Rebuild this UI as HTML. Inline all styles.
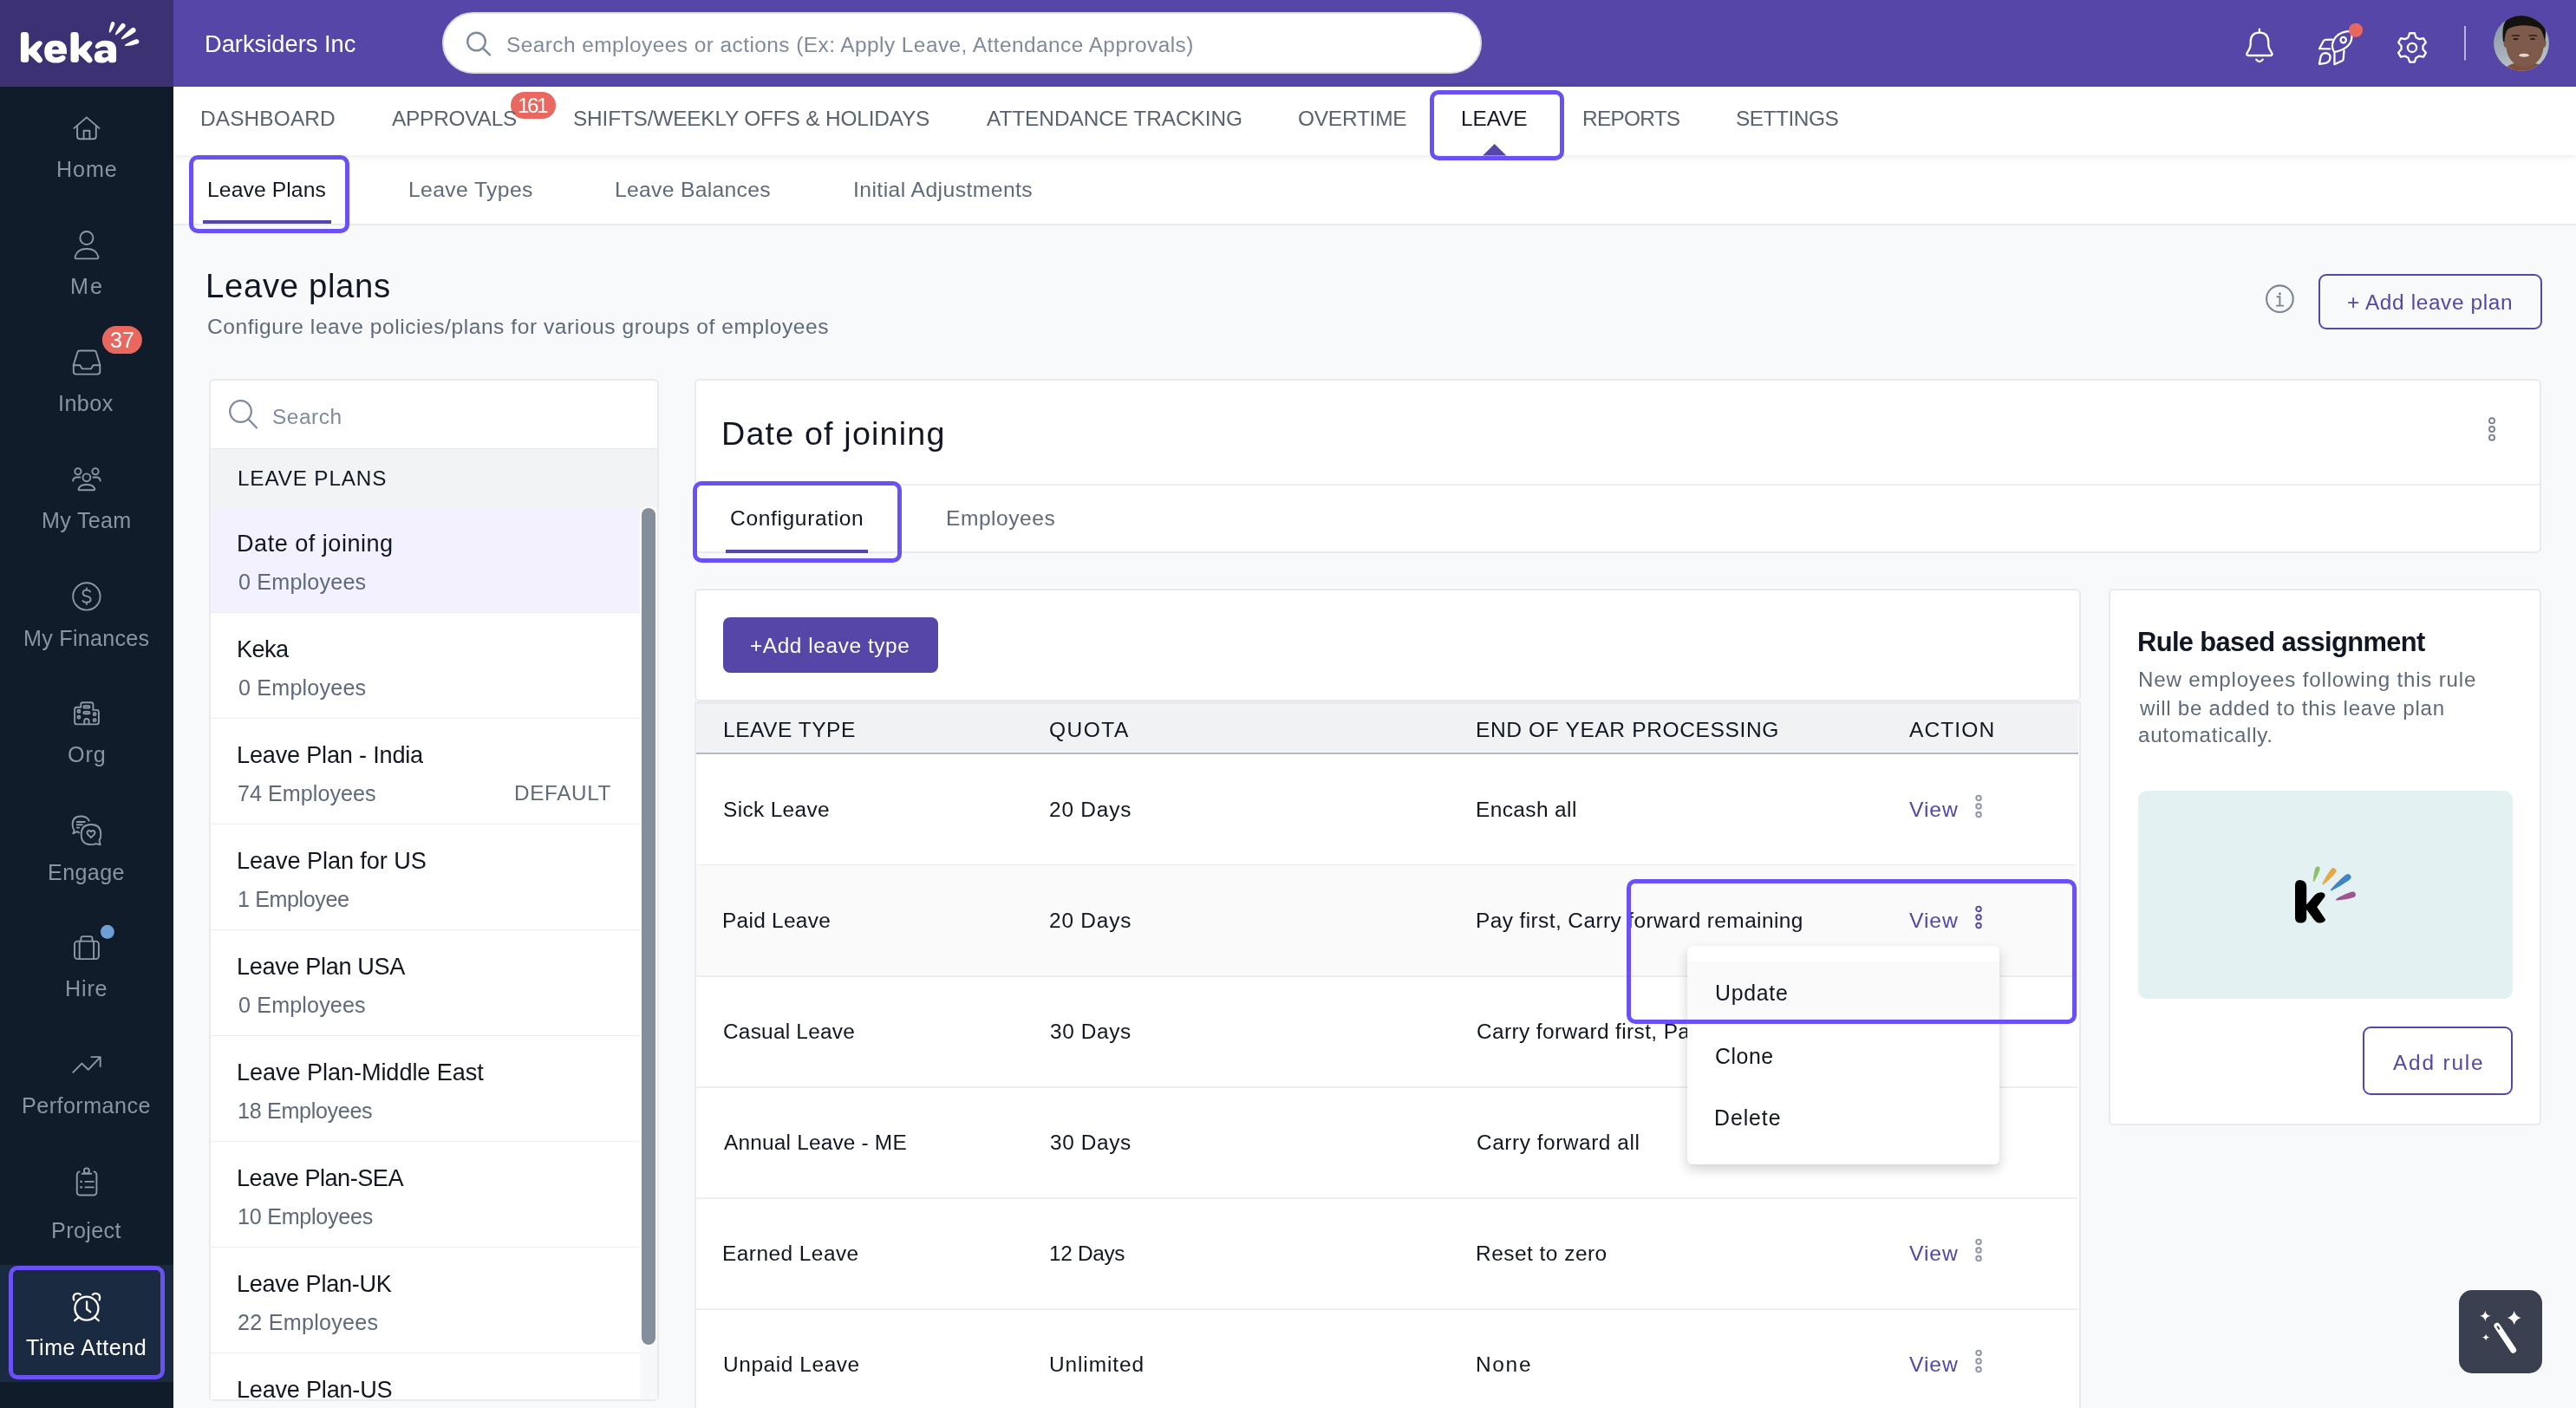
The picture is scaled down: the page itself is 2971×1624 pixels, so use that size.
<!DOCTYPE html><html><head><meta charset="utf-8"><title>Leave plans</title><style>*{box-sizing:border-box}html,body{margin:0;padding:0}body{width:2971px;height:1624px;overflow:hidden;background:#F8F9FB;font-family:"Liberation Sans",sans-serif;position:relative}.a{position:absolute}.t{position:absolute;line-height:0;white-space:pre;z-index:5;will-change:transform}svg.a{z-index:5;overflow:visible}</style></head><body><div class="a" style="left:0px;top:0px;width:200px;height:100px;background:#3C3173"></div>
<svg class="a" style="left:0px;top:0px;" width="200" height="100" viewBox="0 0 200 100"><path d="M23.9,39.8 Q23.9,37.1 26.8,37.1 L29.5,37.1 Q33.2,37.1 33.2,41.5 L33.2,57 L41,49.2 Q43.6,46.8 46.4,47.3 Q49.8,48.4 48.4,51.2 L42.2,59.1 L48.6,67.6 Q50,70.8 47,72.2 Q44,73.2 41.6,70.2 L33.2,62.2 L33.2,68.8 Q33.2,72.1 29.8,72.1 L27.3,72.1 Q23.9,72.1 23.9,68.8 Z" fill="#fff"/><path d="M23.9,39.8 Q23.9,37.1 26.8,37.1 L29.5,37.1 Q33.2,37.1 33.2,41.5 L33.2,57 L41,49.2 Q43.6,46.8 46.4,47.3 Q49.8,48.4 48.4,51.2 L42.2,59.1 L48.6,67.6 Q50,70.8 47,72.2 Q44,73.2 41.6,70.2 L33.2,62.2 L33.2,68.8 Q33.2,72.1 29.8,72.1 L27.3,72.1 Q23.9,72.1 23.9,68.8 Z" fill="#fff" transform="translate(57.6,0)"/><path d="M77,62.2 L77,59.5 Q77,46.8 64,46.8 Q51.2,46.8 51.2,59.7 Q51.2,72.6 64.5,72.6 Q71.5,72.6 75,68.7 Q76.6,66.4 74.6,64.6 Q72.5,62.8 70,64.4 Q67.5,66.3 64.5,66.2 Q61,66 59.9,62.2 Z" fill="#fff"/><path d="M59.9,57.2 Q60.5,53.2 64,53.2 Q67.5,53.2 68,57.2 Z" fill="#3C3173"/><path d="M110.6,55.6 Q108.9,53.6 110.6,51.4 Q114,46.8 121.5,46.8 Q134.1,46.8 134.1,58 L134.1,69.3 Q134.1,72.3 131,72.3 L128.6,72.3 Q125.6,72.3 124.8,69.4 Q121.6,72.6 117,72.6 Q108.7,72.6 108.7,65.5 Q108.7,58.2 118,58.2 L124.8,58.2 Q124.2,53.4 120,53.4 Q116.2,53.4 114,55.6 Q112.3,57.1 110.6,55.6 Z" fill="#fff"/><ellipse cx="121.2" cy="63.8" rx="3.7" ry="2.6" transform="rotate(-12 121.2 63.8)" fill="#3C3173"/></svg>
<svg class="a" style="left:0px;top:0px;" width="200" height="100" viewBox="0 0 200 100"><path d="M127.46,37.06 C129.28,34.41 131.35,30.64 132.27,28.14 A2.20,2.20 0 0 0 128.16,26.57 C127.16,29.04 126.19,33.23 125.77,36.42 A0.90,0.90 0 0 0 127.46,37.06 Z" fill="#fff"/><path d="M134.37,39.92 C137.88,37.63 141.85,34.10 143.93,31.55 A2.80,2.80 0 0 0 139.65,27.93 C137.49,30.41 134.67,34.92 133.00,38.76 A0.90,0.90 0 0 0 134.37,39.92 Z" fill="#fff"/><path d="M141.32,45.16 C146.31,43.10 152.11,39.75 155.40,37.20 A3.00,3.00 0 0 0 151.80,32.40 C148.44,34.86 143.60,39.50 140.24,43.72 A0.90,0.90 0 0 0 141.32,45.16 Z" fill="#fff"/><path d="M145.26,53.06 C149.72,52.73 155.29,51.61 158.61,50.42 A2.70,2.70 0 0 0 156.88,45.31 C153.52,46.39 148.42,48.90 144.68,51.35 A0.90,0.90 0 0 0 145.26,53.06 Z" fill="#fff"/></svg>
<div class="a" style="left:200px;top:0px;width:2771px;height:100px;background:#5546A8"></div>
<span class="t" style="left:235.50px;top:50.74px;font-size:27.29px;color:#fff;">Darksiders Inc</span>
<div class="a" style="left:510px;top:14px;width:1199px;height:71px;background:#fff;border:2px solid #DADDE6;border-radius:36px"></div>
<svg class="a" style="left:530px;top:30px;" width="44" height="40" viewBox="0 0 44 40"><circle cx="19.5" cy="18" r="10.3" fill="none" stroke="#7F8B9B" stroke-width="2.4"/><line x1="27" y1="25.6" x2="35" y2="33.4" stroke="#7F8B9B" stroke-width="2.4" stroke-linecap="round"/></svg>
<span class="t" style="left:584.40px;top:51.84px;font-size:24.43px;color:#7F8B9B;letter-spacing:0.446px;">Search employees or actions (Ex: Apply Leave, Attendance Approvals)</span>
<svg class="a" style="left:2560px;top:0px;" width="411" height="100" viewBox="0 0 411 100"><g transform="translate(-2560,0)"><path d="M2605.9,33.6 L2605.9,36.6" stroke="#fff" stroke-width="2.3" fill="none" stroke-linecap="round" stroke-linejoin="round"/><path d="M2593,64 L2619,64 Q2621.5,63.6 2620.2,61.2 L2617.6,56.6 Q2616.2,54 2616.2,51 L2616.2,48.4 Q2616.2,37.6 2605.9,37.6 Q2595.7,37.6 2595.7,48.4 L2595.7,51 Q2595.7,54 2594.2,56.6 L2591.6,61.2 Q2590.4,63.6 2593,64 Z" stroke="#fff" stroke-width="2.3" fill="none" stroke-linecap="round" stroke-linejoin="round"/><path d="M2602.2,68.6 Q2605.9,73.6 2609.7,68.6" stroke="#fff" stroke-width="2.3" fill="none" stroke-linecap="round" stroke-linejoin="round"/><path d="M2692.2,60.2 C2687.5,53 2690,39.5 2706,36.4 Q2710,35.8 2711.6,37 Q2712.8,39 2712.4,43.5 C2711.5,52 2704,57.6 2692.2,60.2 Z" stroke="#fff" stroke-width="2.3" fill="none" stroke-linecap="round" stroke-linejoin="round"/><circle cx="2702.7" cy="46.1" r="3.2" stroke="#fff" stroke-width="2.3" fill="none" stroke-linecap="round" stroke-linejoin="round"/><path d="M2689.8,45.6 L2682,45.8 Q2680.5,46 2679.8,47.3 L2675,56.2 L2687.2,56.4" stroke="#fff" stroke-width="2.3" fill="none" stroke-linecap="round" stroke-linejoin="round"/><path d="M2692.5,61.8 L2692.4,74.2 L2701.5,70 Q2702.6,69.3 2702.7,68 L2703.5,58.3" stroke="#fff" stroke-width="2.3" fill="none" stroke-linecap="round" stroke-linejoin="round"/><path d="M2675,73.8 L2676.3,66.5 Q2677.5,61.3 2682,61.2 Q2687.8,61.6 2687.6,66.6 Q2686.8,72.4 2680.5,73.2 Z" stroke="#fff" stroke-width="2.3" fill="none" stroke-linecap="round" stroke-linejoin="round"/><path d="M2777.48,43.14 L2779.21,38.23 L2784.79,38.23 L2786.52,43.14 L2789.93,45.11 L2795.04,44.15 L2797.83,48.98 L2794.44,52.93 L2794.44,56.87 L2797.83,60.82 L2795.04,65.65 L2789.93,64.69 L2786.52,66.66 L2784.79,71.57 L2779.21,71.57 L2777.48,66.66 L2774.07,64.69 L2768.96,65.65 L2766.17,60.82 L2769.56,56.87 L2769.56,52.93 L2766.17,48.98 L2768.96,44.15 L2774.07,45.11 Z" stroke="#fff" stroke-width="2.3" fill="none" stroke-linecap="round" stroke-linejoin="round"/><circle cx="2782" cy="54.9" r="5.1" stroke="#fff" stroke-width="2.3" fill="none" stroke-linecap="round" stroke-linejoin="round"/><circle cx="2717" cy="34.8" r="8.1" fill="#E8675F"/></g><rect x="282" y="30" width="2" height="39.5" fill="rgba(255,255,255,0.6)"/><defs><clipPath id="av"><circle cx="348" cy="49.9" r="31.9"/></clipPath><linearGradient id="avg" x1="0" y1="0" x2="0.3" y2="1"><stop offset="0" stop-color="#7F8E98"/><stop offset="0.6" stop-color="#A3AFB6"/><stop offset="1" stop-color="#C3CBCF"/></linearGradient></defs><g clip-path="url(#av)"><g transform="translate(-2560,0)"><rect x="2870" y="12" width="80" height="80" fill="url(#avg)"/><path d="M2884,92 Q2886,76 2900,73 L2924,73 Q2938,76 2940,92 Z" fill="#7E5038"/><ellipse cx="2890.5" cy="50" rx="3" ry="5" fill="#7A5646"/><ellipse cx="2933.5" cy="50" rx="3" ry="5" fill="#7A5646"/><ellipse cx="2912" cy="53" rx="21.5" ry="24.5" fill="#7D5A4A"/><rect x="2889" y="29" width="46" height="26" rx="5" fill="#7D5A4A"/><path d="M2887,48 Q2884,24 2896,19 Q2912,13 2928,19 Q2939,25 2935,48 Q2933,36 2928,32 Q2918,28.5 2906,29.5 Q2896,30.5 2892,34 Q2889,38 2888.5,48 Z" fill="#141211"/><path d="M2897,41.5 Q2901,40 2906,41.5 M2916.5,41.5 Q2921,40 2926,41.5" stroke="#2A1D17" stroke-width="1.6" fill="none"/><ellipse cx="2901.5" cy="45" rx="3" ry="1.3" fill="#2E201A"/><ellipse cx="2921" cy="45" rx="3" ry="1.3" fill="#2E201A"/><path d="M2903,61.5 Q2911,67.5 2919,61.5 Q2911,63.5 2903,61.5 Z" fill="#5A3A2E"/><ellipse cx="2911" cy="63.7" rx="6" ry="2" fill="#E6D6CF"/></g></g></svg>
<div class="a" style="left:0px;top:100px;width:200px;height:1524px;background:#111C2A"></div>
<div class="a" style="left:0px;top:1459px;width:200px;height:135px;background:#1A2B41"></div>
<svg class="a" style="left:0px;top:0px;" width="200" height="1624" viewBox="0 0 200 1624"><path d="M85.4,147.9 L99.9,135.4 L114.5,147.9" stroke="#8E98A6" stroke-width="1.9" fill="none" stroke-linecap="round" stroke-linejoin="round"/><path d="M89.1,145.4 L89.1,157.2 Q89.1,160.2 92.1,160.2 L107.8,160.2 Q110.8,160.2 110.8,157.2 L110.8,145.4" stroke="#8E98A6" stroke-width="1.9" fill="none" stroke-linecap="round" stroke-linejoin="round"/><path d="M96.6,160.2 L96.6,150.7 L103.4,150.7 L103.4,160.2" stroke="#8E98A6" stroke-width="1.9" fill="none" stroke-linecap="round" stroke-linejoin="round"/><circle cx="99.9" cy="274.5" r="7.5" stroke="#8E98A6" stroke-width="1.9" fill="none" stroke-linecap="round" stroke-linejoin="round"/><path d="M88,298.4 L111.8,298.4 Q113.8,298.4 113.3,296 Q111,287 100,287 Q89,287 86.7,296 Q86.2,298.4 88,298.4 Z" stroke="#8E98A6" stroke-width="1.9" fill="none" stroke-linecap="round" stroke-linejoin="round"/><path d="M84.8,421 L89.3,406.5 Q89.8,404.5 92,404.5 L108.3,404.5 Q110.5,404.5 111,406.5 L115.3,421 L115.3,428.5 Q115.3,431.6 112.2,431.6 L87.9,431.6 Q84.8,431.6 84.8,428.5 Z" stroke="#8E98A6" stroke-width="1.9" fill="none" stroke-linecap="round" stroke-linejoin="round"/><path d="M84.8,421.2 L92.3,421.2 L94.8,425.4 L105,425.4 L107.5,421.2 L115.3,421.2" stroke="#8E98A6" stroke-width="1.9" fill="none" stroke-linecap="round" stroke-linejoin="round"/><circle cx="99.9" cy="550.8" r="4.4" stroke="#8E98A6" stroke-width="1.9" fill="none" stroke-linecap="round" stroke-linejoin="round"/><path d="M91.6,565.2 L108.4,565.2 Q109.6,565.2 109.3,563.8 Q107.5,559 99.9,559 Q92.3,559 90.6,563.8 Q90.3,565.2 91.6,565.2 Z" stroke="#8E98A6" stroke-width="1.9" fill="none" stroke-linecap="round" stroke-linejoin="round"/><circle cx="89.9" cy="543.75" r="3.6" stroke="#8E98A6" stroke-width="1.9" fill="none" stroke-linecap="round" stroke-linejoin="round"/><circle cx="110" cy="543.75" r="3.6" stroke="#8E98A6" stroke-width="1.9" fill="none" stroke-linecap="round" stroke-linejoin="round"/><path d="M84.2,554.6 Q84.5,550.5 89,550.5 L92.4,550.5 M115.7,554.6 Q115.4,550.5 110.9,550.5 L107.5,550.5" stroke="#8E98A6" stroke-width="1.9" fill="none" stroke-linecap="round" stroke-linejoin="round"/><circle cx="99.9" cy="687.9" r="15.7" stroke="#8E98A6" stroke-width="1.9" fill="none" stroke-linecap="round" stroke-linejoin="round"/><path d="M104.1,682.3 Q102.8,680.6 99.9,680.6 Q95.6,680.6 95.6,683.9 Q95.6,686.7 99.9,687.6 Q104.6,688.6 104.6,691.6 Q104.6,694.8 99.9,694.8 Q96.5,694.8 95.4,693 M99.9,678.5 L99.9,680.6 M99.9,694.8 L99.9,697" stroke="#8E98A6" stroke-width="1.9" fill="none" stroke-linecap="round" stroke-linejoin="round"/><path d="M93.2,815.7 L93.2,812.6 Q93.2,810.2 95.6,810.2 L105,810.2 Q107.4,810.2 107.4,812.6 L107.4,818.9 L111.4,818.9 Q113.9,818.9 113.9,821.4 L113.9,833 Q113.9,835.4 111.4,835.4 L88.6,835.4 Q86.1,835.4 86.1,833 L86.1,818.2 Q86.1,815.7 88.6,815.7 Z" stroke="#8E98A6" stroke-width="1.9" fill="none" stroke-linecap="round" stroke-linejoin="round"/><path d="M97.3,835.4 L97.3,831.6 Q97.3,829 99.9,829 Q102.6,829 102.6,831.6 L102.6,835.4" stroke="#8E98A6" stroke-width="1.9" fill="none" stroke-linecap="round" stroke-linejoin="round"/><rect x="89.5" y="819.0" width="2.8" height="2.8" rx="1" stroke="#8E98A6" stroke-width="1.9" fill="none" stroke-linecap="round" stroke-linejoin="round"/><rect x="89.5" y="825.8000000000001" width="2.8" height="2.8" rx="1" stroke="#8E98A6" stroke-width="1.9" fill="none" stroke-linecap="round" stroke-linejoin="round"/><rect x="96.4" y="814.0999999999999" width="7" height="2.4" rx="1" stroke="#8E98A6" stroke-width="1.9" fill="none" stroke-linecap="round" stroke-linejoin="round"/><rect x="96.4" y="820.9" width="7" height="2.4" rx="1" stroke="#8E98A6" stroke-width="1.9" fill="none" stroke-linecap="round" stroke-linejoin="round"/><rect x="107.69999999999999" y="822.3000000000001" width="2.8" height="2.8" rx="1" stroke="#8E98A6" stroke-width="1.9" fill="none" stroke-linecap="round" stroke-linejoin="round"/><rect x="107.69999999999999" y="829.1" width="2.8" height="2.8" rx="1" stroke="#8E98A6" stroke-width="1.9" fill="none" stroke-linecap="round" stroke-linejoin="round"/><path d="M102.7,946.6 Q100.5,941.5 93.2,941.5 Q83.6,941.5 83.6,951 Q83.6,955.3 85.7,957.8 L84.3,961.3 L89,959.2 L91.2,960.3" stroke="#8E98A6" stroke-width="1.9" fill="none" stroke-linecap="round" stroke-linejoin="round"/><path d="M88.8,948 L97.8,948 M88.8,951.3 L94.8,951.3 M88.8,954.6 L91.2,954.6" stroke="#8E98A6" stroke-width="1.9" fill="none" stroke-linecap="round" stroke-linejoin="round"/><path d="M110.6,973.1 Q108.3,974.1 105,974.1 Q93.7,974.1 93.7,962.4 Q93.7,951 105,951 Q116.3,951 116.3,962.4 Q116.3,966.6 114.5,969.1 L115.6,974.2 Z" stroke="#8E98A6" stroke-width="1.9" fill="none" stroke-linecap="round" stroke-linejoin="round"/><path d="M105,966.2 L101.2,962.3 Q99.8,960.3 101.2,958.7 Q103.1,957 105,959.3 Q106.9,957 108.8,958.7 Q110.2,960.3 108.8,962.3 Z" stroke="#8E98A6" stroke-width="1.9" fill="none" stroke-linecap="round" stroke-linejoin="round"/><rect x="86" y="1085.6" width="27.9" height="20.5" rx="3.5" stroke="#8E98A6" stroke-width="1.9" fill="none" stroke-linecap="round" stroke-linejoin="round"/><path d="M93.4,1085.6 L93.4,1082.2 Q93.4,1080.1 95.5,1080.1 L104.4,1080.1 Q106.5,1080.1 106.5,1082.2 L106.5,1085.6 M91.7,1085.6 L91.7,1106.1 M108.1,1085.6 L108.1,1106.1" stroke="#8E98A6" stroke-width="1.9" fill="none" stroke-linecap="round" stroke-linejoin="round"/><circle cx="123.9" cy="1074.8" r="10.5" fill="#0F1A27"/><circle cx="123.9" cy="1074.8" r="8" fill="#6C9FD6"/><path d="M84.3,1236.9 L94.4,1226.6 L101.8,1233.8 L115.5,1219.3 M105.4,1219.1 L115.7,1219.1 L115.7,1230" stroke="#8E98A6" stroke-width="1.9" fill="none" stroke-linecap="round" stroke-linejoin="round"/><path d="M91.5,1351.4 Q88.75,1352 88.75,1355.6 L88.75,1374.4 Q88.75,1378.55 92.9,1378.55 L107.2,1378.55 Q111.4,1378.55 111.4,1374.4 L111.4,1355.6 Q111.4,1352 108.5,1351.4" stroke="#8E98A6" stroke-width="1.9" fill="none" stroke-linecap="round" stroke-linejoin="round"/><circle cx="99.9" cy="1350.4" r="3" stroke="#8E98A6" stroke-width="1.9" fill="none" stroke-linecap="round" stroke-linejoin="round"/><path d="M94.6,1353.8 L105.3,1353.8" stroke="#8E98A6" stroke-width="1.9" fill="none" stroke-linecap="round" stroke-linejoin="round" stroke-width="2.2"/><circle cx="93.6" cy="1362.9" r="1.3" fill="#8E98A6"/><circle cx="93.6" cy="1369.4" r="1.3" fill="#8E98A6"/><path d="M98.4,1362.9 L107.8,1362.9 M98.4,1369.4 L107.8,1369.4" stroke="#8E98A6" stroke-width="1.9" fill="none" stroke-linecap="round" stroke-linejoin="round"/><circle cx="99.9" cy="1509.1" r="13.5" stroke="#fff" stroke-width="2.3" fill="none" stroke-linecap="round" stroke-linejoin="round"/><path d="M100.1,1501.5 L100.1,1510 L104.2,1513.2" stroke="#fff" stroke-width="2.3" fill="none" stroke-linecap="round" stroke-linejoin="round"/><path d="M85.2,1499.3 Q83.5,1494 87.5,1492.3 Q90.8,1491 93,1493.3 M114.6,1499.3 Q116.3,1494 112.3,1492.3 Q109,1491 106.8,1493.3 M90.3,1519.6 L86.2,1523.2 M109.6,1519.6 L113.8,1523.2" stroke="#fff" stroke-width="2.3" fill="none" stroke-linecap="round" stroke-linejoin="round"/></svg>
<svg class="a" style="left:116px;top:375.6px;" width="48" height="32.1" viewBox="0 0 48 32.1"><rect x="1.9" y="0" width="46" height="32.1" rx="16" fill="#E8675F"/></svg>
<span class="t" style="left:127.10px;top:392.29px;font-size:25.14px;color:#fff;letter-spacing:0.027px;">37</span>
<span class="t" style="left:64.65px;top:195.19px;font-size:25.14px;color:#8A95A2;letter-spacing:0.884px;">Home</span>
<span class="t" style="left:81.00px;top:330.29px;font-size:25.14px;color:#8A95A2;letter-spacing:2.071px;">Me</span>
<span class="t" style="left:67.15px;top:465.29px;font-size:25.14px;color:#8A95A2;letter-spacing:0.450px;">Inbox</span>
<span class="t" style="left:47.60px;top:600.29px;font-size:25.14px;color:#8A95A2;letter-spacing:0.303px;">My Team</span>
<span class="t" style="left:26.75px;top:735.79px;font-size:25.14px;color:#8A95A2;letter-spacing:0.264px;">My Finances</span>
<span class="t" style="left:78.15px;top:870.49px;font-size:25.14px;color:#8A95A2;letter-spacing:0.895px;">Org</span>
<span class="t" style="left:55.20px;top:1005.59px;font-size:25.14px;color:#8A95A2;letter-spacing:0.390px;">Engage</span>
<span class="t" style="left:75.20px;top:1139.89px;font-size:25.14px;color:#8A95A2;letter-spacing:0.836px;">Hire</span>
<span class="t" style="left:25.30px;top:1274.89px;font-size:25.14px;color:#8A95A2;letter-spacing:0.454px;">Performance</span>
<span class="t" style="left:58.75px;top:1418.99px;font-size:25.14px;color:#8A95A2;letter-spacing:0.381px;">Project</span>
<span class="t" style="left:30.00px;top:1553.89px;font-size:25.14px;color:#fff;letter-spacing:0.565px;">Time Attend</span>
<div class="a" style="left:10.2px;top:1459.9px;width:179.9px;height:131.0px;border:5.8px solid #6B50F5;border-radius:10px;z-index:50"></div>
<div class="a" style="left:200px;top:100px;width:2771px;height:78.5px;background:#fff;box-shadow:0 2px 7px rgba(20,30,50,0.09);z-index:2"></div>
<div class="a" style="left:200px;top:178px;width:2771px;height:82px;background:#fff;border-bottom:2px solid #E8EAEE;z-index:1"></div>
<div style="position:absolute;z-index:3">
<span class="t" style="left:231.20px;top:136.54px;font-size:24.43px;color:#58636F;letter-spacing:0.130px;">DASHBOARD</span>
<span class="t" style="left:452.00px;top:136.54px;font-size:24.43px;color:#58636F;letter-spacing:-0.231px;">APPROVALS</span>
<span class="t" style="left:661.00px;top:136.54px;font-size:24.43px;color:#58636F;letter-spacing:-0.188px;">SHIFTS/WEEKLY OFFS &amp; HOLIDAYS</span>
<span class="t" style="left:1137.50px;top:136.54px;font-size:24.43px;color:#58636F;letter-spacing:-0.067px;">ATTENDANCE TRACKING</span>
<span class="t" style="left:1496.50px;top:136.54px;font-size:24.43px;color:#58636F;letter-spacing:-0.217px;">OVERTIME</span>
<span class="t" style="left:1685.00px;top:136.54px;font-size:24.43px;color:#111722;letter-spacing:-0.084px;">LEAVE</span>
<span class="t" style="left:1825.00px;top:136.54px;font-size:24.43px;color:#58636F;letter-spacing:-0.754px;">REPORTS</span>
<span class="t" style="left:2002.00px;top:136.54px;font-size:24.43px;color:#58636F;letter-spacing:-0.490px;">SETTINGS</span>
<div class="a" style="left:589.4px;top:105.8px;width:51.4px;height:31.7px;background:#E8675F;border-radius:16px"></div>
<span class="t" style="left:596.50px;top:122.28px;font-size:24.29px;color:#fff;letter-spacing:-2.504px;">161</span>
<svg class="a" style="left:1710px;top:166px;" width="28" height="14" viewBox="0 0 28 14"><path d="M0,13.5 L13.7,0 L27.4,13.5 Z" fill="#5546A8"/></svg>
</div>
<div class="a" style="left:1648.8px;top:104px;width:155.70000000000005px;height:81.1px;border:5.8px solid #6B50F5;border-radius:10px;z-index:50"></div>
<span class="t" style="left:238.90px;top:219.24px;font-size:24.71px;color:#111722;letter-spacing:0.089px;">Leave Plans</span>
<span class="t" style="left:470.50px;top:219.24px;font-size:24.71px;color:#5E6A7A;letter-spacing:0.378px;">Leave Types</span>
<span class="t" style="left:709.00px;top:219.24px;font-size:24.71px;color:#5E6A7A;letter-spacing:0.297px;">Leave Balances</span>
<span class="t" style="left:984.00px;top:219.24px;font-size:24.71px;color:#5E6A7A;letter-spacing:0.422px;">Initial Adjustments</span>
<div class="a" style="left:234px;top:254px;width:148px;height:4px;background:#5546A8;z-index:4"></div>
<div class="a" style="left:217.9px;top:179px;width:185.20000000000002px;height:89.89999999999998px;border:5.8px solid #6B50F5;border-radius:10px;z-index:50"></div>
<span class="t" style="left:237.40px;top:329.93px;font-size:38.29px;color:#111722;letter-spacing:0.669px;">Leave plans</span>
<span class="t" style="left:239.40px;top:377.29px;font-size:24.57px;color:#5E6A7A;letter-spacing:0.554px;">Configure leave policies/plans for various groups of employees</span>
<svg class="a" style="left:2610px;top:325px;" width="40" height="40" viewBox="0 0 40 40"><circle cx="19.4" cy="19.7" r="15.3" fill="none" stroke="#7A8491" stroke-width="2.1"/><circle cx="19.4" cy="13.8" r="1.5" fill="#7A8491"/><path d="M15.6,17.3 L19.4,17.3 L19.4,27.6 M15,27.6 L24,27.6" fill="none" stroke="#7A8491" stroke-width="1.9"/></svg>
<div class="a" style="left:2673.8px;top:315.8px;width:258px;height:64px;border:2.2px solid #5546A8;border-radius:9px"></div>
<span class="t" style="left:2706.70px;top:349.04px;font-size:24.43px;color:#5546A8;letter-spacing:0.617px;">+ Add leave plan</span>
<div class="a" style="left:241px;top:437px;width:519px;height:1179px;background:#fff;border:2px solid #E8EAEE;border-radius:6px"></div>
<svg class="a" style="left:258px;top:456px;" width="44" height="44" viewBox="0 0 44 44"><circle cx="19.5" cy="18.5" r="12.3" fill="none" stroke="#7F8B9B" stroke-width="2.3"/><line x1="28.5" y1="27.5" x2="38" y2="37.5" stroke="#7F8B9B" stroke-width="2.3" stroke-linecap="round"/></svg>
<span class="t" style="left:314.00px;top:480.54px;font-size:24.43px;color:#7F8B9B;letter-spacing:0.541px;">Search</span>
<div class="a" style="left:243px;top:517px;width:515px;height:68px;background:#F2F3F5;border-top:1px solid #E8EAEE"></div>
<span class="t" style="left:273.50px;top:552.18px;font-size:24.29px;color:#111722;letter-spacing:0.854px;">LEAVE PLANS</span>
<div class="a" style="left:738px;top:585px;width:20px;height:1029px;background:#F7F8FA"></div>
<div class="a" style="left:243px;top:585.3px;width:495px;height:121px;background:#F3F1FD"></div>
<div class="a" style="left:243px;top:706.3px;width:495px;height:1.6px;background:#EBEDF0"></div>
<span class="t" style="left:272.90px;top:626.60px;font-size:27.14px;color:#111722;letter-spacing:0.484px;">Date of joining</span>
<span class="t" style="left:274.90px;top:670.59px;font-size:25.14px;color:#5E6A7A;letter-spacing:0.192px;">0 Employees</span>
<div class="a" style="left:243px;top:707.3px;width:495px;height:121px;background:#fff"></div>
<div class="a" style="left:243px;top:828.3px;width:495px;height:1.6px;background:#EBEDF0"></div>
<span class="t" style="left:272.90px;top:748.60px;font-size:27.14px;color:#111722;letter-spacing:-0.613px;">Keka</span>
<span class="t" style="left:274.90px;top:792.59px;font-size:25.14px;color:#5E6A7A;letter-spacing:0.192px;">0 Employees</span>
<div class="a" style="left:243px;top:829.3px;width:495px;height:121px;background:#fff"></div>
<div class="a" style="left:243px;top:950.3px;width:495px;height:1.6px;background:#EBEDF0"></div>
<span class="t" style="left:272.90px;top:870.60px;font-size:27.14px;color:#111722;letter-spacing:-0.204px;">Leave Plan - India</span>
<span class="t" style="left:273.90px;top:914.59px;font-size:25.14px;color:#5E6A7A;letter-spacing:0.041px;">74 Employees</span>
<div class="a" style="left:243px;top:951.3px;width:495px;height:121px;background:#fff"></div>
<div class="a" style="left:243px;top:1072.3px;width:495px;height:1.6px;background:#EBEDF0"></div>
<span class="t" style="left:272.90px;top:992.60px;font-size:27.14px;color:#111722;letter-spacing:-0.084px;">Leave Plan for US</span>
<span class="t" style="left:273.90px;top:1036.59px;font-size:25.14px;color:#5E6A7A;letter-spacing:-0.401px;">1 Employee</span>
<div class="a" style="left:243px;top:1073.3px;width:495px;height:121px;background:#fff"></div>
<div class="a" style="left:243px;top:1194.3px;width:495px;height:1.6px;background:#EBEDF0"></div>
<span class="t" style="left:272.90px;top:1114.60px;font-size:27.14px;color:#111722;letter-spacing:-0.358px;">Leave Plan USA</span>
<span class="t" style="left:274.90px;top:1158.59px;font-size:25.14px;color:#5E6A7A;letter-spacing:0.142px;">0 Employees</span>
<div class="a" style="left:243px;top:1195.3px;width:495px;height:121px;background:#fff"></div>
<div class="a" style="left:243px;top:1316.3px;width:495px;height:1.6px;background:#EBEDF0"></div>
<span class="t" style="left:272.90px;top:1236.60px;font-size:27.14px;color:#111722;letter-spacing:-0.078px;">Leave Plan-Middle East</span>
<span class="t" style="left:273.90px;top:1280.59px;font-size:25.14px;color:#5E6A7A;letter-spacing:-0.323px;">18 Employees</span>
<div class="a" style="left:243px;top:1317.3px;width:495px;height:121px;background:#fff"></div>
<div class="a" style="left:243px;top:1438.3px;width:495px;height:1.6px;background:#EBEDF0"></div>
<span class="t" style="left:272.90px;top:1358.60px;font-size:27.14px;color:#111722;letter-spacing:-0.504px;">Leave Plan-SEA</span>
<span class="t" style="left:273.90px;top:1402.59px;font-size:25.14px;color:#5E6A7A;letter-spacing:-0.259px;">10 Employees</span>
<div class="a" style="left:243px;top:1439.3px;width:495px;height:121px;background:#fff"></div>
<div class="a" style="left:243px;top:1560.3px;width:495px;height:1.6px;background:#EBEDF0"></div>
<span class="t" style="left:272.90px;top:1480.60px;font-size:27.14px;color:#111722;letter-spacing:-0.304px;">Leave Plan-UK</span>
<span class="t" style="left:273.90px;top:1524.59px;font-size:25.14px;color:#5E6A7A;letter-spacing:0.268px;">22 Employees</span>
<div class="a" style="left:243px;top:1561.3px;width:495px;height:52.700000000000045px;background:#fff"></div>
<span class="t" style="left:272.90px;top:1602.60px;font-size:27.14px;color:#111722;letter-spacing:-0.238px;">Leave Plan-US</span>
<span class="t" style="left:592.50px;top:914.98px;font-size:24.29px;color:#5E6A7A;letter-spacing:0.641px;">DEFAULT</span>
<div class="a" style="left:738px;top:584px;width:20px;height:969px;background:#fff;border-radius:10px"></div>
<div class="a" style="left:740px;top:586px;width:16px;height:965px;background:#858E9B;border-radius:8px"></div>
<div class="a" style="left:801px;top:437px;width:2130px;height:201px;background:#fff;border:2px solid #E8EAEE;border-radius:6px"></div>
<div class="a" style="left:803px;top:558px;width:2126px;height:2px;background:#ECEEF1"></div>
<span class="t" style="left:832.30px;top:499.93px;font-size:37.71px;color:#111722;letter-spacing:1.166px;">Date of joining</span>
<svg class="a" style="left:2864px;top:475px;" width="20" height="40" viewBox="0 0 20 40"><circle cx="10" cy="10.3" r="3.05" fill="none" stroke="#7A8491" stroke-width="1.9"/><circle cx="10" cy="20" r="3.05" fill="none" stroke="#7A8491" stroke-width="1.9"/><circle cx="10" cy="29.7" r="3.05" fill="none" stroke="#7A8491" stroke-width="1.9"/></svg>
<span class="t" style="left:841.90px;top:598.49px;font-size:24.57px;color:#111722;letter-spacing:0.638px;">Configuration</span>
<span class="t" style="left:1091.00px;top:598.49px;font-size:24.57px;color:#5E6A7A;letter-spacing:0.522px;">Employees</span>
<div class="a" style="left:837px;top:634px;width:164px;height:4px;background:#5546A8"></div>
<div class="a" style="left:799.1px;top:554.9px;width:240.9999999999999px;height:93.89999999999998px;border:5.8px solid #6B50F5;border-radius:10px;z-index:50"></div>
<div class="a" style="left:801px;top:679px;width:1599px;height:130px;background:#fff;border:2px solid #E8EAEE;border-radius:6px"></div>
<div class="a" style="left:834px;top:712px;width:248px;height:64px;background:#5546A8;border-radius:8px"></div>
<span class="t" style="left:865.40px;top:744.84px;font-size:24.43px;color:#fff;letter-spacing:0.568px;">+Add leave type</span>
<div class="a" style="left:801px;top:808.5px;width:1599px;height:816px;background:#fff;border:2px solid #E8EAEE;border-top:3px solid #E8EAEE;border-bottom:none"></div>
<div class="a" style="left:803px;top:811.5px;width:1594px;height:56.5px;background:#F1F2F4"></div>
<div class="a" style="left:803px;top:868px;width:1594px;height:2px;background:#B3BAC5"></div>
<span class="t" style="left:833.80px;top:841.79px;font-size:24.57px;color:#111722;letter-spacing:0.493px;">LEAVE TYPE</span>
<span class="t" style="left:1210.20px;top:841.79px;font-size:24.57px;color:#111722;letter-spacing:1.468px;">QUOTA</span>
<span class="t" style="left:1701.60px;top:841.79px;font-size:24.57px;color:#111722;letter-spacing:0.605px;">END OF YEAR PROCESSING</span>
<span class="t" style="left:2201.60px;top:841.79px;font-size:24.57px;color:#111722;letter-spacing:1.069px;">ACTION</span>
<div class="a" style="left:803px;top:997px;width:1593px;height:1.5px;background:#EBEDF0"></div>
<span class="t" style="left:833.80px;top:933.74px;font-size:24.43px;color:#111722;letter-spacing:0.347px;">Sick Leave</span>
<span class="t" style="left:1210.20px;top:933.74px;font-size:24.43px;color:#111722;letter-spacing:0.803px;">20 Days</span>
<span class="t" style="left:1701.60px;top:933.74px;font-size:24.43px;color:#111722;letter-spacing:0.405px;">Encash all</span>
<span class="t" style="left:2201.60px;top:933.64px;font-size:24.71px;color:#5546A8;letter-spacing:0.881px;">View</span>
<svg class="a" style="left:2274px;top:912.9000000000001px;" width="16" height="34" viewBox="0 0 16 34"><circle cx="8" cy="7.45" r="2.8" fill="none" stroke="#8A94A3" stroke-width="1.9"/><circle cx="8" cy="17.00" r="2.8" fill="none" stroke="#8A94A3" stroke-width="1.9"/><circle cx="8" cy="26.55" r="2.8" fill="none" stroke="#8A94A3" stroke-width="1.9"/></svg>
<div class="a" style="left:803px;top:998px;width:1593px;height:127px;background:#FAFAFB"></div>
<div class="a" style="left:803px;top:1125px;width:1593px;height:1.5px;background:#EBEDF0"></div>
<span class="t" style="left:832.80px;top:1061.74px;font-size:24.43px;color:#111722;letter-spacing:0.286px;">Paid Leave</span>
<span class="t" style="left:1210.20px;top:1061.74px;font-size:24.43px;color:#111722;letter-spacing:0.803px;">20 Days</span>
<span class="t" style="left:1701.60px;top:1061.74px;font-size:24.43px;color:#111722;letter-spacing:0.414px;">Pay first, Carry forward remaining</span>
<span class="t" style="left:2201.60px;top:1061.64px;font-size:24.71px;color:#5546A8;letter-spacing:0.881px;">View</span>
<svg class="a" style="left:2274px;top:1040.9px;" width="16" height="34" viewBox="0 0 16 34"><circle cx="8" cy="7.45" r="2.8" fill="none" stroke="#5546A8" stroke-width="1.9"/><circle cx="8" cy="17.00" r="2.8" fill="none" stroke="#5546A8" stroke-width="1.9"/><circle cx="8" cy="26.55" r="2.8" fill="none" stroke="#5546A8" stroke-width="1.9"/></svg>
<div class="a" style="left:803px;top:1253px;width:1593px;height:1.5px;background:#EBEDF0"></div>
<span class="t" style="left:833.80px;top:1189.74px;font-size:24.43px;color:#111722;letter-spacing:0.222px;">Casual Leave</span>
<span class="t" style="left:1211.20px;top:1189.74px;font-size:24.43px;color:#111722;letter-spacing:0.620px;">30 Days</span>
<span class="t" style="left:1702.60px;top:1189.74px;font-size:24.43px;color:#111722;letter-spacing:0.384px;">Carry forward first, Pay remaining</span>
<span class="t" style="left:2201.60px;top:1189.64px;font-size:24.71px;color:#5546A8;letter-spacing:0.881px;">View</span>
<svg class="a" style="left:2274px;top:1168.9px;" width="16" height="34" viewBox="0 0 16 34"><circle cx="8" cy="7.45" r="2.8" fill="none" stroke="#8A94A3" stroke-width="1.9"/><circle cx="8" cy="17.00" r="2.8" fill="none" stroke="#8A94A3" stroke-width="1.9"/><circle cx="8" cy="26.55" r="2.8" fill="none" stroke="#8A94A3" stroke-width="1.9"/></svg>
<div class="a" style="left:803px;top:1381px;width:1593px;height:1.5px;background:#EBEDF0"></div>
<span class="t" style="left:834.80px;top:1317.74px;font-size:24.43px;color:#111722;letter-spacing:0.186px;">Annual Leave - ME</span>
<span class="t" style="left:1211.20px;top:1317.74px;font-size:24.43px;color:#111722;letter-spacing:0.620px;">30 Days</span>
<span class="t" style="left:1702.60px;top:1317.74px;font-size:24.43px;color:#111722;letter-spacing:0.543px;">Carry forward all</span>
<span class="t" style="left:2201.60px;top:1317.64px;font-size:24.71px;color:#5546A8;letter-spacing:0.881px;">View</span>
<svg class="a" style="left:2274px;top:1296.9px;" width="16" height="34" viewBox="0 0 16 34"><circle cx="8" cy="7.45" r="2.8" fill="none" stroke="#8A94A3" stroke-width="1.9"/><circle cx="8" cy="17.00" r="2.8" fill="none" stroke="#8A94A3" stroke-width="1.9"/><circle cx="8" cy="26.55" r="2.8" fill="none" stroke="#8A94A3" stroke-width="1.9"/></svg>
<div class="a" style="left:803px;top:1509px;width:1593px;height:1.5px;background:#EBEDF0"></div>
<span class="t" style="left:832.80px;top:1445.74px;font-size:24.43px;color:#111722;letter-spacing:0.464px;">Earned Leave</span>
<span class="t" style="left:1210.20px;top:1445.74px;font-size:24.43px;color:#111722;letter-spacing:-0.347px;">12 Days</span>
<span class="t" style="left:1701.60px;top:1445.74px;font-size:24.43px;color:#111722;letter-spacing:0.495px;">Reset to zero</span>
<span class="t" style="left:2201.60px;top:1445.64px;font-size:24.71px;color:#5546A8;letter-spacing:0.881px;">View</span>
<svg class="a" style="left:2274px;top:1424.9px;" width="16" height="34" viewBox="0 0 16 34"><circle cx="8" cy="7.45" r="2.8" fill="none" stroke="#8A94A3" stroke-width="1.9"/><circle cx="8" cy="17.00" r="2.8" fill="none" stroke="#8A94A3" stroke-width="1.9"/><circle cx="8" cy="26.55" r="2.8" fill="none" stroke="#8A94A3" stroke-width="1.9"/></svg>
<div class="a" style="left:803px;top:1637px;width:1593px;height:1.5px;background:#EBEDF0"></div>
<span class="t" style="left:833.80px;top:1573.74px;font-size:24.43px;color:#111722;letter-spacing:0.588px;">Unpaid Leave</span>
<span class="t" style="left:1210.20px;top:1573.74px;font-size:24.43px;color:#111722;letter-spacing:0.899px;">Unlimited</span>
<span class="t" style="left:1701.60px;top:1573.74px;font-size:24.43px;color:#111722;letter-spacing:1.700px;">None</span>
<span class="t" style="left:2201.60px;top:1573.64px;font-size:24.71px;color:#5546A8;letter-spacing:0.881px;">View</span>
<svg class="a" style="left:2274px;top:1552.9px;" width="16" height="34" viewBox="0 0 16 34"><circle cx="8" cy="7.45" r="2.8" fill="none" stroke="#8A94A3" stroke-width="1.9"/><circle cx="8" cy="17.00" r="2.8" fill="none" stroke="#8A94A3" stroke-width="1.9"/><circle cx="8" cy="26.55" r="2.8" fill="none" stroke="#8A94A3" stroke-width="1.9"/></svg>
<div style="position:absolute;left:1946px;top:1091px;width:360px;height:252px;background:#fff;border-radius:6px;box-shadow:0 6px 14px rgba(0,0,0,0.18),0 0 2px rgba(0,0,0,0.06);z-index:20;overflow:hidden"><div style="position:absolute;left:0;top:18px;width:360px;height:72px;background:#FAFAFB"></div></div>
<div style="position:absolute;z-index:21">
<span class="t" style="left:1978.00px;top:1145.39px;font-size:24.86px;color:#111722;letter-spacing:0.713px;">Update</span>
<span class="t" style="left:1978.00px;top:1217.59px;font-size:24.86px;color:#111722;letter-spacing:0.543px;">Clone</span>
<span class="t" style="left:1977.00px;top:1289.19px;font-size:24.86px;color:#111722;letter-spacing:0.933px;">Delete</span>
</div>
<div class="a" style="left:1875.6px;top:1013.8px;width:519.2000000000003px;height:167.20000000000005px;border:5.8px solid #6B50F5;border-radius:10px;z-index:50"></div>
<div class="a" style="left:2432px;top:679px;width:499px;height:619px;background:#fff;border:2px solid #E8EAEE;border-radius:5px"></div>
<span class="t" style="left:2465.00px;top:741.01px;font-size:30.86px;color:#111722;font-weight:700;letter-spacing:-0.621px;">Rule based assignment</span>
<span class="t" style="left:2466.00px;top:784.44px;font-size:24.14px;color:#5E6A7A;letter-spacing:0.814px;">New employees following this rule</span>
<span class="t" style="left:2468.00px;top:817.04px;font-size:24.14px;color:#5E6A7A;letter-spacing:0.727px;">will be added to this leave plan</span>
<span class="t" style="left:2466.00px;top:848.44px;font-size:24.14px;color:#5E6A7A;letter-spacing:0.708px;">automatically.</span>
<div class="a" style="left:2466px;top:912px;width:432px;height:240px;background:#E3F1F3;border-radius:10px"></div>
<svg class="a" style="left:2600px;top:980px;" width="130" height="100" viewBox="0 0 130 100"><g transform="translate(-2600,-980)"><path d="M2647,1021 Q2647,1015 2653,1015 Q2660.2,1015.5 2660.2,1023 L2660.2,1043.5 L2669.5,1032.5 Q2673.5,1028.8 2677.5,1029.3 Q2682.5,1030.2 2681.3,1034.2 L2672.3,1046.2 L2682.2,1060.8 Q2680.5,1064.8 2675,1064.6 Q2671.5,1064.4 2669,1061 L2660.2,1049 L2660.2,1058.5 Q2660,1064.6 2653.5,1064.6 Q2647,1064.6 2647,1058.5 Z" fill="#000"/><path d="M2669.25,1016.28 C2671.86,1012.17 2674.42,1006.62 2675.54,1003.00 A2.70,2.70 0 0 0 2670.40,1001.34 C2669.18,1004.93 2668.01,1010.93 2667.72,1015.78 A0.80,0.80 0 0 0 2669.25,1016.28 Z" fill="#8CC06A"/><path d="M2679.98,1019.99 C2685.12,1016.08 2690.71,1010.51 2693.72,1006.64 A3.30,3.30 0 0 0 2688.56,1002.52 C2685.45,1006.31 2681.25,1012.99 2678.57,1018.87 A0.90,0.90 0 0 0 2679.98,1019.99 Z" fill="#E3A946"/><path d="M2689.32,1027.15 C2696.80,1023.57 2705.27,1018.26 2710.16,1014.41 A3.50,3.50 0 0 0 2705.89,1008.86 C2700.92,1012.59 2693.60,1019.41 2688.23,1025.72 A0.90,0.90 0 0 0 2689.32,1027.15 Z" fill="#4286C0"/><path d="M2695.14,1038.38 C2701.80,1037.99 2709.80,1036.47 2714.61,1034.92 A3.30,3.30 0 0 0 2712.68,1028.61 C2707.82,1030.03 2700.35,1033.26 2694.61,1036.66 A0.90,0.90 0 0 0 2695.14,1038.38 Z" fill="#A0558F"/></g></svg>
<div class="a" style="left:2725.2px;top:1184.3px;width:172.4px;height:79.1px;border:2px solid #5546A8;border-radius:9px"></div>
<span class="t" style="left:2760.00px;top:1225.54px;font-size:24.43px;color:#5546A8;letter-spacing:1.803px;">Add rule</span>
<div class="a" style="left:2836px;top:1488px;width:96px;height:96px;background:#3A4050;border-radius:15px"></div>
<svg class="a" style="left:2836px;top:1488px;" width="96" height="96" viewBox="0 0 96 96"><path d="M30.3,23.4 Q30.94,29.16 36.7,29.8 Q30.94,30.44 30.3,36.2 Q29.66,30.44 23.9,29.8 Q29.66,29.16 30.3,23.4 Z" fill="#fff"/><path d="M63.7,24.1 Q65.3,30.5 71.7,32.1 Q65.3,33.7 63.7,40.1 Q62.1,33.7 55.7,32.1 Q62.1,30.5 63.7,24.1 Z" fill="#fff"/><path d="M31.1,50.199999999999996 Q31.520000000000003,53.98 35.300000000000004,54.4 Q31.520000000000003,54.82 31.1,58.6 Q30.68,54.82 26.900000000000002,54.4 Q30.68,53.98 31.1,50.199999999999996 Z" fill="#fff"/><line x1="44" y1="41.2" x2="62.7" y2="69.2" stroke="#fff" stroke-width="7" stroke-linecap="round"/><line x1="44.6" y1="42.2" x2="46.2" y2="44.6" stroke="#3A4050" stroke-width="2" stroke-linecap="round"/></svg></body></html>
